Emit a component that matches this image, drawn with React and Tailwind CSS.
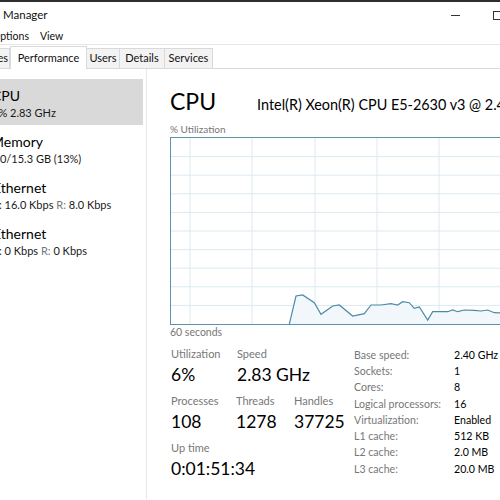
import React from 'react'

const pts = [
  [118.3, 186.3], [125, 158], [131.7, 157], [143.3, 164.7], [150, 176.3], [161.7, 168],
  [168.3, 167], [181.7, 178], [193.3, 175.7], [200, 167], [210, 167], [220, 165.7],
  [226.7, 167], [231.7, 163.7], [238.3, 164.7], [243.3, 170.3], [248.3, 169], [256.7, 182],
  [261.7, 173.7], [276.7, 173.7], [281.7, 172], [286.7, 173.7], [293.3, 172], [303.3, 172.3],
  [310, 173], [316.7, 172], [323.3, 174.7], [330, 175], [345, 175],
]

function Graph() {
  const line = pts.map((p) => p.join(',')).join(' ')
  const area = line + ' 345,187 118.3,187'
  const vx = [19, 81, 144, 206, 268, 330]
  const hy = [18.6, 37.2, 55.8, 74.4, 93, 111.6, 130.2, 148.8, 167.4]
  return (
    <svg width="345" height="186" className="block">
      {vx.map((x) => (
        <line key={'v' + x} x1={x} y1="0" x2={x} y2="187" stroke="#dbeaf1" strokeWidth="1" />
      ))}
      {hy.map((y) => (
        <line key={'h' + y} x1="0" y1={y} x2="345" y2={y} stroke="#dbeaf1" strokeWidth="1" />
      ))}
      <polygon points={area} fill="#f1f7fb" />
      <polyline points={line} fill="none" stroke="#4d8aa6" strokeWidth="1.2" />
    </svg>
  )
}

function SideItem({ title, sub, selected, shift }) {
  return (
    <div className={'h-[46px] pt-[7px] overflow-hidden ' + (selected ? 'bg-[#d9d9d9]' : '')}>
      <div className={shift}>
        <div className="text-[14px] leading-[19px] text-black whitespace-nowrap">{title}</div>
        <div className="text-[11px] leading-[15px] text-[#1a1a1a] whitespace-nowrap">{sub}</div>
      </div>
    </div>
  )
}

function Stat({ label, value, w }) {
  return (
    <div className={w}>
      <div className="text-[11px] leading-[14px] text-[#777]">{label}</div>
      <div className="text-[17.5px] leading-[28px] text-black whitespace-nowrap">{value}</div>
    </div>
  )
}

export default function App() {
  const info = [
    ['Base speed:', '2.40 GHz'],
    ['Sockets:', '1'],
    ['Cores:', '8'],
    ['Logical processors:', '16'],
    ['Virtualization:', 'Enabled'],
    ['L1 cache:', '512 KB'],
    ['L2 cache:', '2.0 MB'],
    ['L3 cache:', '20.0 MB'],
  ]

  return (
    <div className="w-[500px] h-[500px] overflow-hidden bg-white font-['Lato','Noto_Sans',sans-serif] text-black">
      {/* title bar */}
      <div className="h-[28px] border-t-2 border-[#2e2e2e] flex items-center justify-between">
        <span className="text-[11.5px] pl-[3px] text-[#111]">Manager</span>
        <div className="flex items-center gap-[33px]">
          <div className="w-[9px] h-px bg-[#333]" />
          <div className="w-[10px] h-[9px] border border-[#333] -mr-[3px]" />
        </div>
      </div>

      {/* menu bar */}
      <div className="h-[17px] pt-[2px] flex items-center gap-[11px] text-[10.5px] text-[#111] border-b border-[#e6e6e6] overflow-hidden">
        <span className="-ml-[8px]">Options</span>
        <span>View</span>
      </div>

      {/* tabs */}
      <div className="h-[24px] flex items-end border-b border-[#d9d9d9] text-[11px] text-[#111]">
        <div className="h-[20px] w-[10px] border-r border-t border-[#d9d9d9] bg-[#f3f3f3] overflow-hidden flex items-center justify-end pr-[1px]">
          <span>es</span>
        </div>
        <div className="h-[23px] -mb-px w-[77px] border border-b-0 border-[#d9d9d9] bg-white flex items-center justify-center">
          Performance
        </div>
        <div className="h-[20px] w-[33px] border-r border-t border-[#d9d9d9] bg-[#f3f3f3] flex items-center justify-center">
          Users
        </div>
        <div className="h-[20px] w-[45px] border-r border-t border-[#d9d9d9] bg-[#f3f3f3] flex items-center justify-center">
          Details
        </div>
        <div className="h-[20px] w-[48px] border-r border-t border-[#d9d9d9] bg-[#f3f3f3] flex items-center justify-center">
          Services
        </div>
      </div>

      {/* body */}
      <div className="flex">
        {/* side list */}
        <div className="w-[146px] shrink-0 pt-[10px] pr-[3px] h-[430px]">
          <SideItem title="CPU" sub="6% 2.83 GHz" selected shift="-ml-[8px]" />
          <SideItem title="Memory" sub="2.0/15.3 GB (13%)" shift="-ml-[9px]" />
          <SideItem
            title="Ethernet"
            sub={<>S: 16.0 Kbps <span className="text-[#777]">R:</span> 8.0 Kbps</>}
            shift="-ml-[7px]"
          />
          <SideItem
            title="Ethernet"
            sub={<>S: 0 Kbps <span className="text-[#777]">R:</span> 0 Kbps</>}
            shift="-ml-[7px]"
          />
        </div>

        {/* detail */}
        <div className="pl-[23px] pt-[18px] flex-1 min-w-0 border-l border-[#e8e8e8]">
          <div className="flex items-baseline gap-[41px] whitespace-nowrap">
            <span className="text-[23px] leading-[28px]">CPU</span>
            <span className="text-[14.4px]">Intel(R) Xeon(R) CPU E5-2630 v3 @ 2.40GHz</span>
          </div>
          <div className="text-[10px] leading-[14px] text-[#777] mt-[6px]">% Utilization</div>
          <div className="mt-[1px] w-[345px] h-[188px] border border-[#5b93ad]">
            <Graph />
          </div>
          <div className="text-[10.5px] leading-[14px] text-[#777]">60 seconds</div>

          <div className="flex mt-[8px]">
            <div className="w-[184px] shrink-0 pl-[1px]">
              <div className="flex">
                <Stat label="Utilization" value="6%" w="w-[66px]" />
                <Stat label="Speed" value="2.83 GHz" w="w-[100px]" />
              </div>
              <div className="flex mt-[5px]">
                <Stat label="Processes" value="108" w="w-[65px]" />
                <Stat label="Threads" value="1278" w="w-[58px]" />
                <Stat label="Handles" value="37725" w="w-[60px]" />
              </div>
              <div className="flex mt-[5px]">
                <Stat label="Up time" value="0:01:51:34" w="w-[120px]" />
              </div>
            </div>
            <div className="grid grid-cols-[100px_auto] auto-rows-[16.3px] text-[10.6px] leading-[16px] whitespace-nowrap">
              {info.map(([k, v]) => (
                <React.Fragment key={k}>
                  <span className="text-[#777]">{k}</span>
                  <span className="text-black">{v}</span>
                </React.Fragment>
              ))}
            </div>
          </div>
        </div>
      </div>
    </div>
  )
}
